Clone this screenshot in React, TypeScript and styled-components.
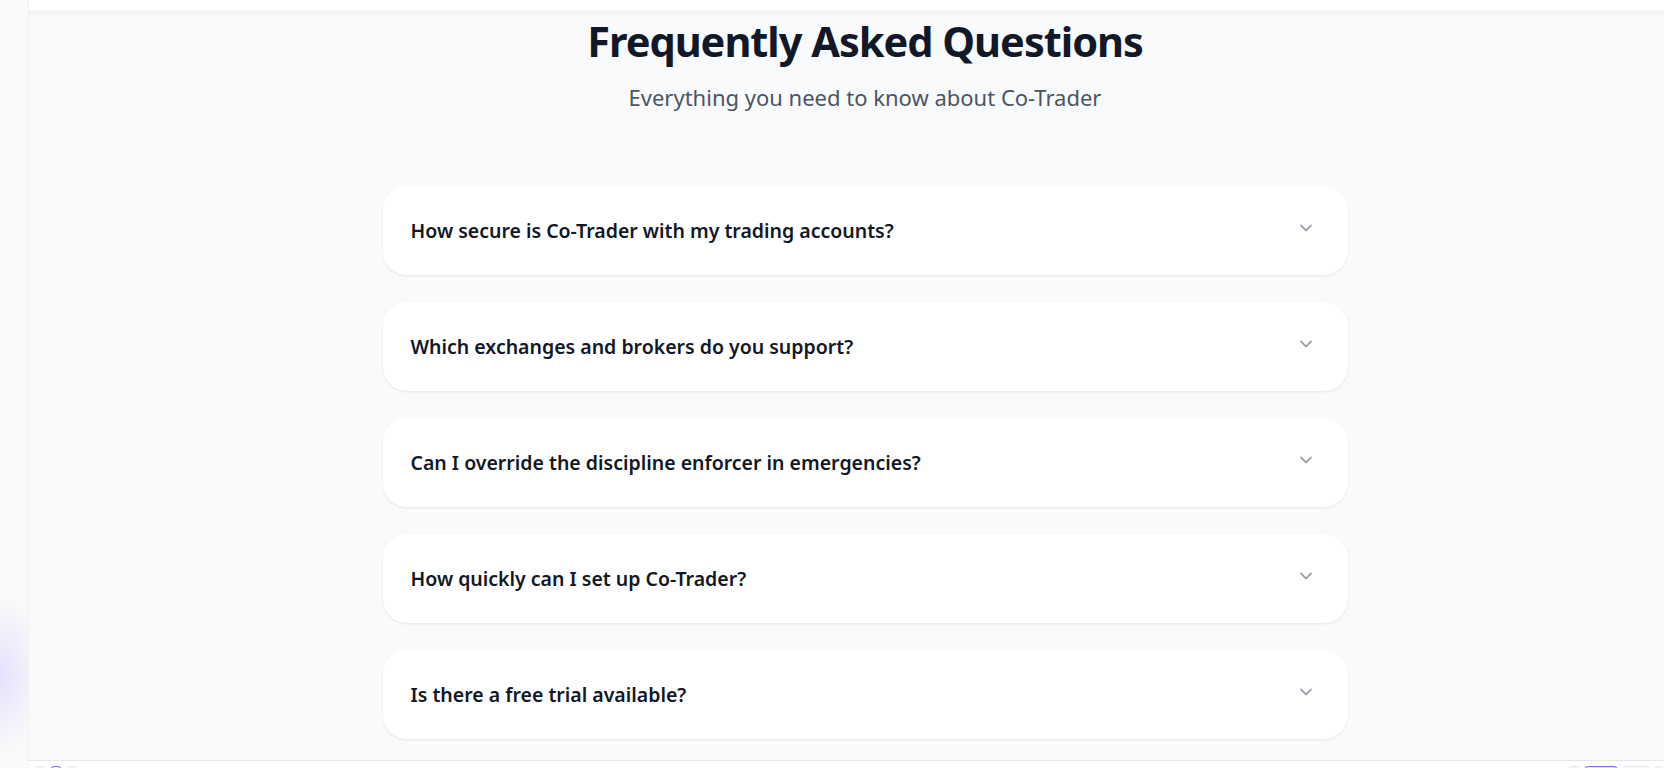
import React from 'react';
import styled, { createGlobalStyle } from 'styled-components';
import { ChevronDown } from 'lucide-react';

const GlobalStyle = createGlobalStyle`
  html, body {
    margin: 0;
    padding: 0;
    background: #ffffff;
    font-family: 'Noto Sans', 'Open Sans', sans-serif;
  }
  * {
    box-sizing: border-box;
  }
`;

const Shell = styled.div`
  display: flex;
  width: 100%;
  height: 100vh;
  overflow: hidden;
`;

const SideStrip = styled.aside`
  width: 29px;
  flex-shrink: 0;
  background:
    radial-gradient(ellipse 46px 80px at 0% 675px, rgba(221, 214, 254, 0.7), rgba(237, 233, 254, 0) 100%),
    #fafafa;
  border-right: 1px solid #f1f1f1;
`;

const Main = styled.div`
  flex: 1;
  display: flex;
  flex-direction: column;
  min-width: 0;
`;

const TopBar = styled.div`
  height: 10px;
  background: #ffffff;
  border-bottom: 5px solid #f3f4f6;
  box-sizing: content-box;
`;

const Content = styled.main`
  flex: 1;
  background: #f9fafb;
  padding: 2px 0 0 37px;
`;

const Header = styled.header`
  display: flex;
  flex-direction: column;
  align-items: center;
  text-align: center;
`;

const Title = styled.h2`
  margin: 0;
  font-size: 41.5px;
  line-height: 48px;
  font-weight: 700;
  color: #111827;
  letter-spacing: -1px;
`;

const Subtitle = styled.p`
  margin: 18px 0 0;
  font-size: 22px;
  line-height: 28px;
  color: #4b5563;
`;

const List = styled.div`
  width: 965px;
  margin: 75px auto 0;
  display: flex;
  flex-direction: column;
  gap: 27px;
`;

const Item = styled.div`
  height: 89px;
  background: #ffffff;
  border-radius: 24px;
  box-shadow: 0 1px 3px rgba(17, 24, 39, 0.06), 0 1px 2px rgba(17, 24, 39, 0.03);
  display: flex;
  align-items: center;
  justify-content: space-between;
  padding: 0 32px 0 28px;
  cursor: pointer;
`;

const Question = styled.span`
  font-size: 19.5px;
  font-weight: 600;
  color: #111827;
`;

const Chevron = styled(ChevronDown)`
  color: #9ca3af;
  flex-shrink: 0;
  margin-bottom: 6px;
`;

const Footer = styled.footer`
  height: 8px;
  background: #ffffff;
  border-top: 1px solid #e5e7eb;
  display: flex;
  justify-content: space-between;
  align-items: flex-start;
  padding: 5px 0 0 5px;
  overflow: hidden;
`;

const ToolGroup = styled.div`
  display: flex;
  gap: 4px;
`;

const ToolButton = styled.div<{ w: number; active?: boolean }>`
  width: ${p => p.w}px;
  height: 20px;
  border-radius: 4px;
  border: 1px solid ${p => (p.active ? '#7c6cf6' : '#e5e7eb')};
  background: ${p => (p.active ? '#ede9fe' : '#f9fafb')};
`;

const questions = [
  'How secure is Co-Trader with my trading accounts?',
  'Which exchanges and brokers do you support?',
  'Can I override the discipline enforcer in emergencies?',
  'How quickly can I set up Co-Trader?',
  'Is there a free trial available?',
];

export default function App() {
  return (
    <>
      <GlobalStyle />
      <Shell>
        <SideStrip />
        <Main>
          <TopBar />
          <Content>
            <Header>
              <Title>Frequently Asked Questions</Title>
              <Subtitle>Everything you need to know about Co-Trader</Subtitle>
            </Header>
            <List>
              {questions.map(q => (
                <Item key={q}>
                  <Question>{q}</Question>
                  <Chevron size={20} strokeWidth={2.2} />
                </Item>
              ))}
            </List>
          </Content>
          <Footer>
            <ToolGroup>
              <ToolButton w={12} />
              <ToolButton w={12} active />
              <ToolButton w={12} />
            </ToolGroup>
            <ToolGroup>
              <ToolButton w={12} />
              <ToolButton w={34} active />
              <ToolButton w={28} />
              <ToolButton w={10} />
            </ToolGroup>
          </Footer>
        </Main>
      </Shell>
    </>
  );
}
